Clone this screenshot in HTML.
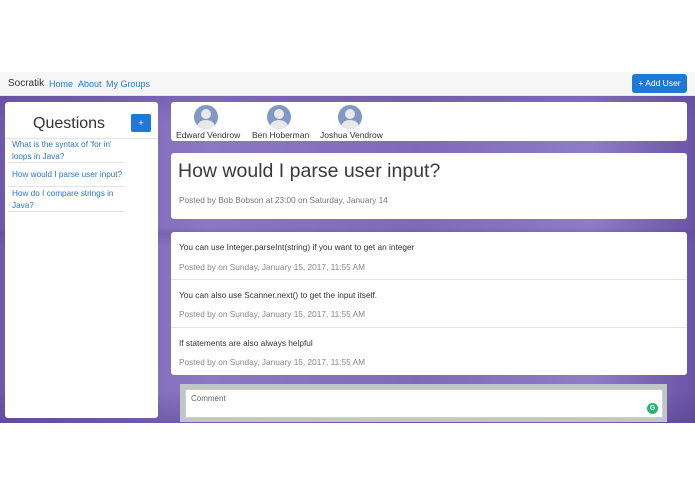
<!DOCTYPE html>
<html><head><meta charset="utf-8"><style>
*{box-sizing:border-box;margin:0;padding:0}
body{width:695px;height:494px;background:#fff;font-family:"Liberation Sans",sans-serif;position:relative;overflow:hidden}
.nav{position:absolute;left:0;top:72px;width:695px;height:24px;background:#f6f6f6;border-bottom:1px solid #e4e4e4}
.nav span{position:absolute;top:7px;font-size:9px;color:#2a79c9}
.bg{position:absolute;left:0;top:96px;width:695px;height:327px;background:
linear-gradient(180deg,rgba(90,70,150,.35) 0,rgba(0,0,0,0) 8%,rgba(0,0,0,0) 40%,rgba(80,60,140,.25) 42%,rgba(0,0,0,0) 46%,rgba(0,0,0,0) 90%,rgba(70,50,130,.35) 100%),
linear-gradient(90deg,#6f58aa 0,#8b78c4 30%,#7f6ab9 60%,#8e7cc6 85%,#6b54a6 100%)}
.card{position:absolute;background:#fff;border-radius:3px}
.av{position:absolute;top:105px;width:24px;height:24px;border-radius:50%;background:#7f98c4;overflow:hidden}
.av:before{content:"";position:absolute;left:7px;top:4px;width:10px;height:10px;border-radius:50%;background:#e8e8ea}
.av:after{content:"";position:absolute;left:3px;top:15px;width:18px;height:14px;border-radius:50%;background:#e8e8ea}
.nm{position:absolute;top:130px;font-size:8.5px;color:#333}
.q{position:absolute;left:12px;font-size:8.2px;color:#2a79c9;line-height:12px;width:115px}
.ln{position:absolute;left:8px;width:116px;height:1px;background:#e4e4e4}
.t{position:absolute;left:179px;font-size:8.3px;color:#333}
.m{position:absolute;left:179px;font-size:8.3px;color:#888}
.sep{position:absolute;left:171px;width:516px;height:1px;background:#e6e6e6}
</style></head><body>
<div class="nav">
<span style="left:8px;color:#333;font-size:10px;top:6px">Socratik</span>
<span style="left:49px">Home</span><span style="left:78px">About</span><span style="left:106px">My Groups</span>
<div style="position:absolute;left:632px;top:2px;width:55px;height:19px;background:#1f79d4;border-radius:3px;color:#fff;font-size:8.5px;text-align:center;line-height:19px">+ Add User</div>
</div>
<div class="bg"></div>
<div class="card" style="left:5px;top:102px;width:153px;height:316px"></div>
<div style="position:absolute;left:33px;top:115px;font-size:16px;color:#333">Questions</div>
<div style="position:absolute;left:131px;top:114px;width:20px;height:18px;background:#1f79d4;border-radius:2px;color:#fff;font-size:9px;text-align:center;line-height:18px">+</div>
<div class="ln" style="left:5px;width:153px;top:138px"></div>
<div class="q" style="top:139px">What is the syntax of 'for in' loops in Java?</div>
<div class="ln" style="top:162px"></div>
<div class="q" style="top:169px">How would I parse user input?</div>
<div class="ln" style="top:186px"></div>
<div class="q" style="top:188px">How do I compare strings in Java?</div>
<div class="ln" style="top:211px"></div>

<div class="card" style="left:171px;top:102px;width:516px;height:39px"></div>
<div class="av" style="left:194px"></div><div class="av" style="left:267px"></div><div class="av" style="left:338px"></div>
<div class="nm" style="left:176px">Edward Vendrow</div>
<div class="nm" style="left:252px">Ben Hoberman</div>
<div class="nm" style="left:320px">Joshua Vendrow</div>

<div class="card" style="left:171px;top:153px;width:516px;height:66px"></div>
<div style="position:absolute;left:178px;top:160px;font-size:19.5px;color:#3a3a3a">How would I parse user input?</div>
<div class="m" style="top:195px;color:#777">Posted by Bob Bobson at 23:00 on Saturday, January 14</div>

<div class="card" style="left:171px;top:232px;width:516px;height:143px"></div>
<div class="t" style="top:242px">You can use Integer.parseInt(string) if you want to get an integer</div>
<div class="m" style="top:262px">Posted by on Sunday, January 15, 2017, 11:55 AM</div>
<div class="sep" style="top:279px"></div>
<div class="t" style="top:290px">You can also use Scanner.next() to get the input itself.</div>
<div class="m" style="top:309px">Posted by on Sunday, January 15, 2017, 11:55 AM</div>
<div class="sep" style="top:327px"></div>
<div class="t" style="top:338px">If statements are also always helpful</div>
<div class="m" style="top:357px">Posted by on Sunday, January 15, 2017, 11:55 AM</div>

<div style="position:absolute;left:180px;top:384px;width:487px;height:38px;background:#c4c4c6"></div>
<div style="position:absolute;left:185px;top:389px;width:478px;height:29px;background:#fff;border:1px solid #b9d4ea;border-radius:2px"></div>
<div style="position:absolute;left:191px;top:394px;font-size:8px;color:#666">Comment</div>
<div style="position:absolute;left:647px;top:403px;width:11px;height:11px;border-radius:50%;background:#27b36f;color:#fff;font-size:7px;text-align:center;line-height:11px;font-weight:bold">G</div>
</body></html>
